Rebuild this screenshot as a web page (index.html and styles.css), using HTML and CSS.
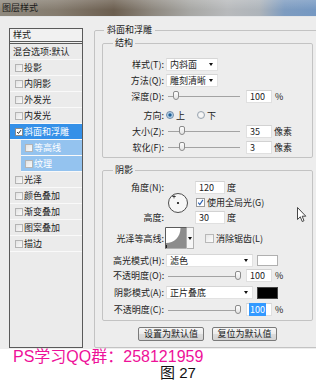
FILE: index.html
```html
<!DOCTYPE html>
<html lang="zh-CN">
<head>
<meta charset="utf-8">
<title>图层样式</title>
<link rel="stylesheet" href="styles.css">
</head>
<body>
<div class="page">
  <div class="titlebar"><span class="title">图层样式</span></div>
  <div class="dialog">
    <div class="sidebar">
      <div class="side-head">样式</div>
      <div class="side-row plain">混合选项:默认</div>
      <div class="side-row"><span class="cb"></span>投影</div>
      <div class="side-row"><span class="cb"></span>内阴影</div>
      <div class="side-row"><span class="cb"></span>外发光</div>
      <div class="side-row"><span class="cb"></span>内发光</div>
      <div class="side-row sel"><span class="cb on"><svg viewBox="0 0 8 8"><path d="M1.5 4 L3.3 6 L6.6 1.5" /></svg></span>斜面和浮雕</div>
      <div class="side-row sub"><span class="cb"></span>等高线</div>
      <div class="side-row sub"><span class="cb"></span>纹理</div>
      <div class="side-row"><span class="cb"></span>光泽</div>
      <div class="side-row"><span class="cb"></span>颜色叠加</div>
      <div class="side-row"><span class="cb"></span>渐变叠加</div>
      <div class="side-row"><span class="cb"></span>图案叠加</div>
      <div class="side-row"><span class="cb"></span>描边</div>
    </div>

    <fieldset class="outer">
      <legend>斜面和浮雕</legend>

      <fieldset class="group struct">
        <legend>结构</legend>
        <div class="row">
          <span class="lbl">样式(T):</span>
          <div class="select w-sm"><span>内斜面</span><i class="arrow"></i></div>
        </div>
        <div class="row">
          <span class="lbl">方法(Q):</span>
          <div class="select w-sm"><span>雕刻清晰</span><i class="arrow"></i></div>
        </div>
        <div class="row">
          <span class="lbl">深度(D):</span>
          <div class="slider"><span class="thumb" style="left:7px"></span></div>
          <span class="num">100</span><span class="unit">%</span>
        </div>
        <div class="row gap3">
          <span class="lbl">方向:</span>
          <span class="radio on"></span><span class="rtext">上</span>
          <span class="radio second"></span><span class="rtext">下</span>
        </div>
        <div class="row">
          <span class="lbl">大小(Z):</span>
          <div class="slider"><span class="thumb" style="left:13px"></span></div>
          <span class="num">35</span><span class="unit px">像素</span>
        </div>
        <div class="row">
          <span class="lbl">软化(F):</span>
          <div class="slider"><span class="thumb" style="left:13px"></span></div>
          <span class="num">3</span><span class="unit px">像素</span>
        </div>
      </fieldset>

      <fieldset class="group shadow">
        <legend>阴影</legend>
        <div class="dialgrid">
          <span class="lbl g-r1">角度(N):</span>
          <span class="lbl g-r3">高度:</span>
          <div class="dial">
            <svg viewBox="0 0 22 22" width="22" height="22">
              <circle cx="11" cy="11" r="9.5" fill="#f7f7f7" stroke="#4d4d4d" stroke-width="1"/>
              <circle cx="11" cy="11" r="1.1" fill="#111"/>
              <path d="M7 2.5 V6.5 M5 4.5 H9" stroke="#555" stroke-width="0.8"/>
              <circle cx="7" cy="4.5" r="0.8" fill="#222"/>
            </svg>
          </div>
          <div class="g-c3 g-r1 inl"><span class="num w30">120</span><span class="unit">度</span></div>
          <div class="g-c3 g-r2 inl"><span class="check on"><svg viewBox="0 0 8 8"><path d="M1.4 4.2 L3.2 6.3 L6.8 1" /></svg></span><span class="ctext">使用全局光(G)</span></div>
          <div class="g-c3 g-r3 inl"><span class="num w30">30</span><span class="unit">度</span></div>
        </div>
        <div class="row contour">
          <span class="lbl tight">光泽等高线:</span>
          <div class="cbox">
            <svg viewBox="0 0 22 22" width="22" height="22">
              <rect x="0" y="0" width="22" height="22" fill="#fff"/>
              <path d="M1 16 C9 16 15.5 10 15.5 1 L21 1 L21 21 L1 21 Z" fill="#8c8c8c"/>
              <path d="M0.5 22 V0.5 H22" fill="none" stroke="#5a5a5a"/>
              <path d="M21.5 0.5 V21.5 H0.5" fill="none" stroke="#b0b0b0"/>
              <path d="M1.5 18 V21" stroke="#222" stroke-width="1"/>
            </svg>
            <span class="cbtn"><i class="arrow"></i></span>
          </div>
          <span class="check aa"></span><span class="ctext">消除锯齿(L)</span>
        </div>
        <div class="row gap4">
          <span class="lbl">高光模式(H):</span>
          <div class="select w-lg"><span>滤色</span><i class="arrow"></i></div>
          <span class="swatch white"></span>
        </div>
        <div class="row">
          <span class="lbl">不透明度(O):</span>
          <div class="slider"><span class="thumb" style="left:69px"></span></div>
          <span class="num">100</span><span class="unit">%</span>
        </div>
        <div class="row tall">
          <span class="lbl">阴影模式(A):</span>
          <div class="select w-lg"><span>正片叠底</span><i class="arrow"></i></div>
          <span class="swatch black"></span>
        </div>
        <div class="row">
          <span class="lbl">不透明度(C):</span>
          <div class="slider"><span class="thumb" style="left:69px"></span></div>
          <span class="num focus"><span class="hl">100</span></span><span class="unit">%</span>
        </div>
      </fieldset>

      <div class="buttons">
        <button class="btn b1">设置为默认值</button>
        <button class="btn b2">复位为默认值</button>
      </div>
    </fieldset>
  </div>

  <div class="caption">
    <div class="qq">PS学习QQ群：258121959</div>
    <div class="fig">图 27</div>
  </div>

  <svg class="cursor" viewBox="0 0 10 16" width="10" height="16">
    <path d="M0.5 0.5 L0.5 12.5 L3.3 9.8 L5.2 14.5 L7 13.7 L5.2 9.2 L8.8 9.2 Z" fill="#fff" stroke="#333" stroke-width="0.9" stroke-linejoin="round"/>
  </svg>
</div>
</body>
</html>
```

FILE: styles.css
```css
* { box-sizing: border-box; }
html, body { margin: 0; padding: 0; }
body {
  width: 316px;
  height: 382px;
  overflow: hidden;
  background: #fff;
  font-family: "Noto Sans CJK SC", "Noto Sans", sans-serif;
  font-size: 9px;
  color: #222;
}
.page { position: relative; width: 316px; height: 382px; overflow: hidden; }

/* title bar with blurred backdrop */
.titlebar {
  height: 17px;
  padding: 2px 0 0 2px;
  line-height: 12px;
  font-size: 9px;
  color: #1a1a1a;
  border-bottom: 1px solid #e4e6e8;
  background:
    linear-gradient(180deg, rgba(255,255,255,0.18) 0%, rgba(255,255,255,0) 60%),
    linear-gradient(90deg, #8f897e 0%, #857c6f 18%, #74685a 30%, #6c5f50 36%, #8d877e 48%, #a7a7a4 60%, #b8babc 72%, #aeb4ba 82%, #7e9cc0 90%, #7598c2 100%);
}

/* dialog */
.dialog {
  height: 332px;
  display: flex;
  align-items: flex-start;
  padding-left: 9px;
  background: #ededed;
  overflow: hidden;
}

/* left list */
.sidebar {
  flex: none;
  margin-top: 11px;
  width: 74px;
  height: 320px;
  border: 1px solid #5a5a5a;
  background: #ebebeb;
}
.side-head {
  height: 15px;
  line-height: 12px;
  padding-left: 3px;
  border-bottom: 3px double #5a5a5a;
  background: #f1f1f1;
}
.side-row {
  display: flex;
  align-items: center;
  height: 16px;
  line-height: 15px;
  padding-left: 5px;
  border-bottom: 1px solid #f9f9f9;
  white-space: nowrap;
}
.side-row.plain { padding-left: 3px; }
.side-row.sel { background: #3490e8; color: #fff; }
.side-row.sub { margin-left: 11px; padding-left: 4px; background: #94c3ef; color: #fff; }

.cb {
  flex: none;
  width: 8px;
  height: 8px;
  margin-right: 1px;
  border: 1px solid #b4b4b4;
  background: linear-gradient(135deg, #e2e2e2, #fafafa);
  display: flex;
}
.cb.on { background: #fff; border-color: #8c8c8c; }
.cb svg, .check svg { width: 100%; height: 100%; }
.cb svg path { fill: none; stroke: #2a2a2a; stroke-width: 1.3; }

/* outer group */
fieldset { margin: 0; min-width: 0; }
legend { line-height: 12px; }
.outer {
  flex: none;
  margin: 7px 0 0 11px;
  width: 228px;
  padding: 0 8px 6px 7px;
  border: 1px solid #c3c3c3;
  border-radius: 2px;
}
.outer > legend { padding: 0 3px; margin-left: 2px; }

.group {
  width: 100%;
  padding: 0 0 2px 10px;
  border: 1px solid #c3c3c3;
  border-radius: 2px;
}
.group > legend { padding: 0 2px; }
.struct { margin-top: 1px; padding-top: 7px; }
.shadow { margin-top: 6px; padding-top: 4px; padding-bottom: 3px; }

.row {
  display: flex;
  align-items: center;
  height: 16px;
  white-space: nowrap;
}
.shadow .row { height: 15px; }
.shadow .row.tall { height: 19px; }
.shadow .row.contour { height: 24px; margin-top: 1px; }
.gap3 { margin-top: 3px; }
.gap4 { margin-top: 3px; }

.lbl {
  flex: none;
  width: 51px;
  margin-right: 2px;
  text-align: right;
  white-space: nowrap;
}
.lbl.tight { margin-right: 1px; }

/* drop-down */
.select {
  flex: none;
  display: flex;
  align-items: center;
  height: 13px;
  padding-left: 3px;
  background: #fff;
  border: 1px solid #e2e2e2;
  border-top-color: #d6d6d6;
}
.select.w-sm { width: 52px; }
.select.w-lg { width: 87px; }
.arrow {
  display: block;
  width: 0;
  height: 0;
  margin-left: auto;
  margin-right: 4px;
  border-left: 2.5px solid transparent;
  border-right: 2.5px solid transparent;
  border-top: 3px solid #111;
}

/* slider */
.slider {
  flex: none;
  position: relative;
  width: 74px;
  height: 12px;
  margin-right: 6px;
}
.slider::before {
  content: "";
  position: absolute;
  left: 2px;
  right: 0;
  top: 6px;
  height: 1px;
  background: #a3a3a3;
}
.thumb {
  position: absolute;
  top: 1px;
  width: 6px;
  height: 9px;
  border: 1px solid #8b8b8b;
  border-radius: 2px 2px 3px 3px;
  background: linear-gradient(180deg, #fdfdfd, #e4e4e4);
}

/* number fields */
.num {
  flex: none;
  width: 26px;
  height: 13px;
  line-height: 11px;
  padding-left: 3px;
  background: #fff;
  border: 1px solid #e0e0e0;
  border-top-color: #d2d2d2;
}
.num.w30 { width: 30px; }
.num .hl { background: #3399ff; color: #fff; padding: 0 1px; margin-left: -1px; }
.unit { margin-left: 3px; }
.unit.px { margin-left: 2px; }

/* radios */
.radio {
  flex: none;
  width: 8px;
  height: 8px;
  border-radius: 50%;
  border: 1px solid #9aa6b2;
  background: radial-gradient(circle, #f6f6f6 0 40%, #dcdcdc 100%);
}
.radio.on {
  border-color: #6f8aa6;
  background: radial-gradient(circle, #1f5d92 0 32%, #9cc2e2 42%, #e4eef7 100%);
}
.radio.second { margin-left: 12px; }
.rtext { margin-left: 2px; }

/* angle block */
.dialgrid {
  display: grid;
  grid-template-columns: 53px 29px 1fr;
  grid-template-rows: 15px 15px 15px;
  align-items: center;
}
.dialgrid .lbl { grid-column: 1; }
.g-r1 { grid-row: 1; }
.g-r2 { grid-row: 2; }
.g-r3 { grid-row: 3; }
.g-c3 { grid-column: 3; }
.dial {
  grid-column: 2;
  grid-row: 1 / 4;
  display: flex;
  align-items: center;
  padding-left: 1px;
}
.dial svg { display: block; }
.inl { display: flex; align-items: center; white-space: nowrap; }
.dialgrid .unit { margin-left: 2px; }

.check {
  flex: none;
  width: 9px;
  height: 9px;
  border: 1px solid #9a9a9a;
  background: linear-gradient(135deg, #e6e6e6, #fdfdfd);
  display: flex;
}
.check.on { background: #fff; margin-left: 1px; }
.check.on svg path { fill: none; stroke: #2b5fae; stroke-width: 1.3; }
.check.aa { margin-left: 11px; border-color: #b8b8b8; }
.ctext { margin-left: 2px; }

/* contour preview */
.cbox {
  flex: none;
  display: flex;
  align-items: flex-start;
  height: 22px;
}
.cbox svg { display: block; }
.cbtn {
  width: 7px;
  height: 22px;
  display: flex;
  align-items: flex-start;
  padding-top: 9px;
  background: #f6f6f6;
  border: 1px solid #b0b0b0;
  border-left: none;
}
.cbtn .arrow { margin: 0 auto; border-left-width: 2px; border-right-width: 2px; }

/* colour swatches */
.swatch {
  flex: none;
  width: 21px;
  height: 11px;
  margin-left: 4px;
  border: 1px solid #b0b0b0;
}
.swatch.white { background: #fff; }
.swatch.black { background: #000; border-color: #444; height: 12px; }

/* buttons */
.buttons {
  display: flex;
  justify-content: center;
  gap: 8px;
  margin-top: 6px;
}
.btn {
  height: 14px;
  padding: 0;
  font-family: inherit;
  font-size: 9px;
  line-height: 12px;
  color: #222;
  border: 1px solid #7a7a7a;
  border-radius: 2px;
  background: linear-gradient(180deg, #f6f6f6 0%, #ebebeb 50%, #dcdcdc 51%, #d3d3d3 100%);
}
.b1 { width: 66px; }
.b2 { width: 65px; }

/* caption below the screenshot */
.caption {
  background: #fff;
  font-family: "Liberation Sans", "Noto Sans CJK SC", sans-serif;
}
.qq {
  height: 16px;
  line-height: 16px;
  padding-left: 13px;
  font-size: 16px;
  color: #ee1199;
  white-space: nowrap;
}
.fig {
  height: 17px;
  line-height: 16px;
  padding-left: 160px;
  font-size: 15px;
  color: #111;
}

/* mouse pointer over the dialog */
.cursor {
  position: absolute;
  left: 297px;
  top: 207px;
}
```
